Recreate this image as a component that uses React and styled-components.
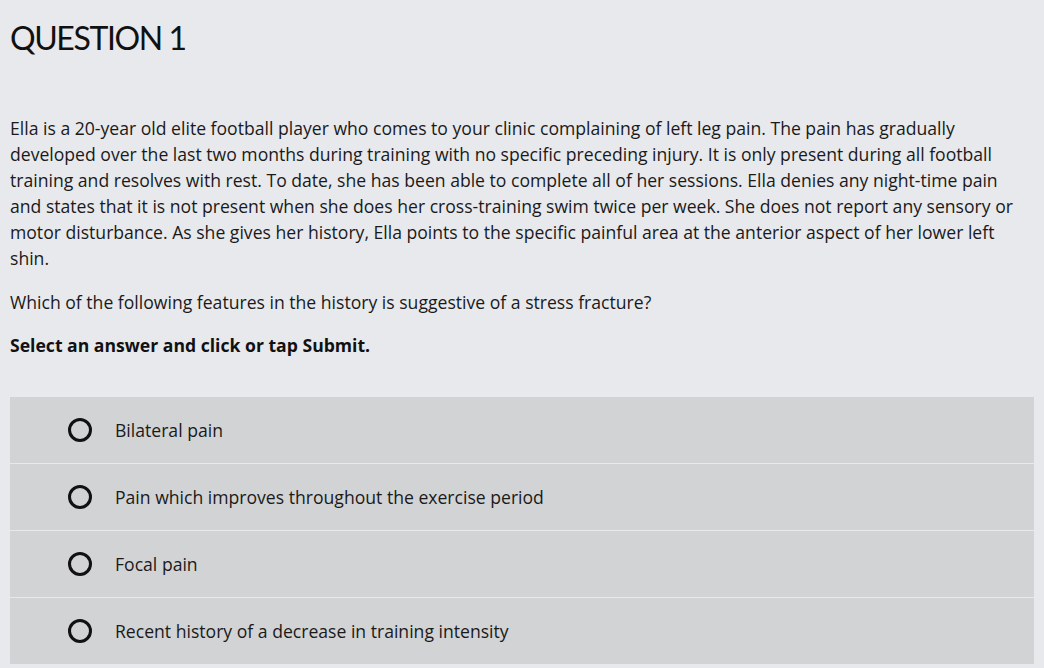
import React from "react";
import styled, { createGlobalStyle } from "styled-components";

const GlobalStyle = createGlobalStyle`
  html, body {
    margin: 0;
    padding: 0;
    background: #e8e9ed;
  }
  body {
    font-family: "Open Sans", "DejaVu Sans", sans-serif;
    color: #1a1a1a;
  }
`;

const options = [
  "Bilateral pain",
  "Pain which improves throughout the exercise period",
  "Focal pain",
  "Recent history of a decrease in training intensity",
];

export default function App() {
  return (
    <>
      <GlobalStyle />
      <Page>
        <Heading>QUESTION 1</Heading>

        <Paragraph>
          Ella is a 20-year old elite football player who comes to your clinic complaining of left leg pain. The pain has gradually developed over the last two months during training with no specific preceding injury. It is only present during all football training and resolves with rest. To date, she has been able to complete all of her sessions. Ella denies any night-time pain and states that it is not present when she does her cross-training swim twice per week. She does not report any sensory or motor disturbance. As she gives her history, Ella points to the specific painful area at the anterior aspect of her lower left shin.
        </Paragraph>

        <Paragraph>
          Which of the following features in the history is suggestive of a stress fracture?
        </Paragraph>

        <Instruction>Select an answer and click or tap Submit.</Instruction>

        <OptionList>
          {options.map((label) => (
            <OptionRow key={label}>
              <Radio />
              <OptionLabel>{label}</OptionLabel>
            </OptionRow>
          ))}
        </OptionList>
      </Page>
    </>
  );
}

const Page = styled.div`
  padding: 0 10px;
`;

const Heading = styled.h1`
  margin: 0;
  padding-top: 18px;
  font-family: Lato, "Open Sans", sans-serif;
  font-weight: 400;
  font-size: 32px;
  line-height: 40px;
  letter-spacing: -1.4px;
  color: #111;
`;

const Paragraph = styled.p`
  margin: 57px 0 0;
  font-size: 17.6px;
  line-height: 26px;
  max-width: 1018px;

  & + & {
    margin-top: 18px;
  }
`;

const Instruction = styled.p`
  margin: 17px 0 0;
  font-size: 17.6px;
  font-weight: 700;
  line-height: 26px;
  color: #111;
`;

const OptionList = styled.ul`
  list-style: none;
  margin: 39px 0 0;
  padding: 0;
  display: flex;
  flex-direction: column;
  gap: 1px;
`;

const OptionRow = styled.li`
  display: flex;
  align-items: center;
  height: 66px;
  background: #d2d3d5;
  padding-left: 58px;
`;

const Radio = styled.span`
  width: 18px;
  height: 18px;
  border: 3px solid #111;
  border-radius: 50%;
  flex-shrink: 0;
`;

const OptionLabel = styled.span`
  margin-left: 23px;
  font-size: 17.6px;
  line-height: 26px;
  color: #1a1a1a;
`;
